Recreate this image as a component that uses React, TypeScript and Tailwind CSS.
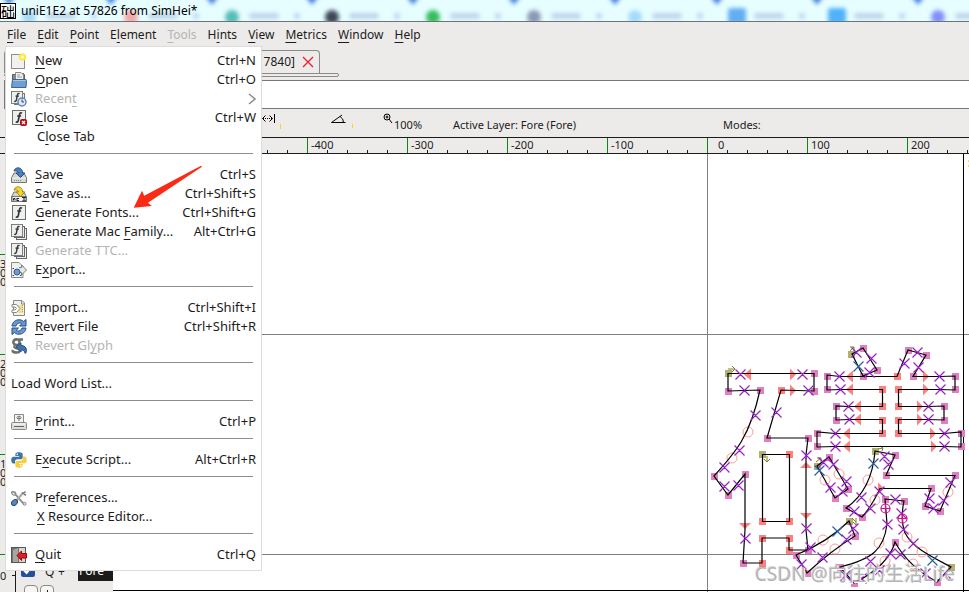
import type { ReactNode } from "react";

type Entry = {
  label?: string;
  // index of the mnemonic letter
  u?: number;
  keys?: string;
  icon?: ReactNode;
  indent?: boolean;
  disabled?: boolean;
  submenu?: boolean;
};

const Icon = ({ children }: { children: ReactNode }) => (
  <svg className="w-4 h-4 shrink-0" viewBox="0 0 16 16" fill="none">
    {children}
  </svg>
);

const FontPage = ({ x = 1, y = 0, s = 14 }: { x?: number; y?: number; s?: number }) => (
  <g transform={`translate(${x} ${y}) scale(${s / 14})`}>
    <rect x="0.5" y="0.5" width="13" height="14" fill="#eef0ee" stroke="#6c6e6b" />
    <path d="M10 3.2C8.6 2.2 7.8 3 7.4 5L6.4 10c-.4 2-1.2 2.6-2.6 1.8M5.2 6h4" stroke="#33363a" strokeWidth="1.7" />
  </g>
);

const FontStack = () => (
  <>
    <rect x="5.5" y="4.5" width="10" height="11" fill="#eee" stroke="#666" />
    <rect x="3.5" y="2.5" width="10" height="11" fill="#eee" stroke="#666" />
    <FontPage x={0} y={0} s={12} />
  </>
);

const Drive = ({ color, edge }: { color: string; edge: string }) => (
  <>
    <path d="M3 6h10l2.5 5v4.5H.5V11z" fill="#d6d8d4" stroke="#74766f" />
    <path d="M1 11h14" stroke="#f6f6f4" />
    <path d="M3 13.5h8" stroke="#888a85" strokeDasharray="1 1" />
    <path d="M3 4C4 1 7 0 9.5 1.5 11 2.5 11.5 4 11.5 6H14L9.5 10.5 5 6h2.5C7.5 4.5 5.5 3.5 3 4z" fill={color} stroke={edge} />
  </>
);

const icons = {
  new: (
    <Icon>
      <rect x="0.5" y="1.5" width="13" height="14" fill="#f1f1ef" stroke="#8c8e8a" />
      <circle cx="11.5" cy="4" r="3.8" fill="#fbe94a" />
      <circle cx="11.5" cy="4" r="1.5" fill="#fffbd0" />
    </Icon>
  ),
  open: (
    <Icon>
      <path d="M1.5 14V2.5h3l1-1h7l1 1.5V14z" fill="#888a85" stroke="#5c5e5a" />
      <path d="M4.5 8V.5H10L12.500 3v5z" fill="#f2f2f0" stroke="#888" />
      <path d="M6 3h3M6 5h5" stroke="#999" />
      <path d="M.5 15.5l1-8H15l.5 1-.5 7z" fill="#729fcf" stroke="#3465a4" />
      <path d="M2 8.500h12.500" stroke="#a9c6e6" />
    </Icon>
  ),
  recent: (
    <Icon>
      <rect x="3.5" y="2.5" width="10" height="11" fill="#eee" stroke="#777" />
      <FontPage x={0} y={0} s={12} />
      <circle cx="11" cy="11" r="4" fill="#dfe9f5" stroke="#5f84b5" strokeWidth="1.5" />
      <path d="M11 8.5V11h2" stroke="#345" />
    </Icon>
  ),
  close: (
    <Icon>
      <FontPage />
      <rect x="9" y="9" width="7" height="7" rx="2" fill="#b80d17" />
      <path d="M11 11l3 3M14 11l-3 3" stroke="#fff" strokeWidth="1.3" />
    </Icon>
  ),
  save: (
    <Icon>
      <Drive color="#4f7fb8" edge="#234f86" />
    </Icon>
  ),
  saveAs: (
    <Icon>
      <Drive color="#f3d52b" edge="#a38a10" />
      <rect x="1" y="10.5" width="14" height="5" fill="#f4f4f2" stroke="#777" />
      <path d="M2.5 14.5v-2H4v2M6 12.5h2M6 14.5h2M6 12v3M11 11.5h4M11 15h4M13 11v4" stroke="#222" />
    </Icon>
  ),
  generate: (
    <Icon>
      <FontPage />
    </Icon>
  ),
  family: (
    <Icon>
      <FontStack />
    </Icon>
  ),
  export: (
    <Icon>
      <path d="M.5.5H8L12 4.500v11H.5z" fill="#f0f0ee" stroke="#888a85" />
      <path d="M8 5.500h2.500V3L15.500 8l-5 5v-2.500H8" fill="#e6e6e4" stroke="#777974" />
      <circle cx="6" cy="10" r="3" fill="#6f9bd1" stroke="#2f5c9a" />
      <path d="M1.500 6.500H3M1.500 13.500H3M9 13.500h1.500" stroke="#444" />
    </Icon>
  ),
  import: (
    <Icon>
      <path d="M2.5.5H11L13.500 3v12.500h-11z" fill="#f0f0ee" stroke="#888a85" />
      <path d="M10.500.5V4h3" stroke="#888a85" />
      <rect x="7" y="5" width="5" height="8" fill="#f2e08a" />
      <path d="M1 4.500h4.500L9 8.500l-3.500 4H1V10h3l1.500-1.500L4 7H1z" fill="#fff" stroke="#888a85" />
      <path d="M11.500 5v8" stroke="#c9a416" strokeDasharray="1 1" />
    </Icon>
  ),
  revert: (
    <Icon>
      <path d="M1 7C1.5 3 4.5.8 8 .8c2 0 3.500.6 4.700 1.700L15 .5V7H8.500l2.300-2.300C9.500 3.500 6 3.500 5 7z" fill="#6b98ce" stroke="#204a87" />
      <path d="M15 9c-.5 4-3.500 6.200-7 6.200-2 0-3.500-.6-4.700-1.700L1 15.500V9h6.500l-2.300 2.300C6.500 12.500 10 12.500 11 9z" fill="#6b98ce" stroke="#204a87" />
    </Icon>
  ),
  revertGlyph: (
    <Icon>
      <path d="M12 1.500H6.500C3 1 2 3 2.500 5S6 7.500 7.500 6.500s1.500-3 0-4M4 8c-2 1.500 2 2.500 4 3s1 3.500-2 3.500-5-.5-4-2.500" stroke="#6d6f69" strokeWidth="2.6" />
      <path d="M5 9l5-4v2.500c3.500 0 5.500 2 5.500 5 0 1.500-.5 2.500-1.500 3 0-2.500-1.500-3.500-4-3.500v2z" fill="#3f72b0" stroke="#2a528a" />
    </Icon>
  ),
  print: (
    <Icon>
      <path d="M3.500 9V.5h9V9" fill="#f4f4f2" stroke="#888a85" />
      <path d="M8 2v5M5.500 3.500L8 2l2.500 1.500M6 4.500h4" stroke="#777" />
      <rect x="0.5" y="8.500" width="15" height="7" rx="1" fill="#dcdcda" stroke="#888a85" />
      <path d="M3 12.500h10" stroke="#666" />
      <path d="M2 10h12" stroke="#fff" />
    </Icon>
  ),
  python: (
    <Icon>
      <path d="M8 .3c-3.200 0-3.600 1-3.600 2.200V4H8.200v.7H2.500C1 4.700.2 6 .2 8s.9 3.400 2.300 3.400H4V9.500C4 8.300 5 7.300 6.200 7.300h3.600c1 0 1.900-.8 1.900-1.900V2.500C11.700 1 10.500.3 8 .3z" fill="#3d73a6" />
      <path d="M8 15.700c3.200 0 3.600-1 3.600-2.200V12H7.800v-.7h5.700c1.500 0 2.300-1.300 2.300-3.300s-.9-3.400-2.300-3.400H12v1.900c0 1.200-1 2.200-2.200 2.200H6.200c-1 0-1.900.8-1.900 1.900v2.900C4.300 15 5.500 15.700 8 15.700z" fill="#f5cf3e" />
      <circle cx="6.3" cy="2.4" r=".8" fill="#fff" />
      <circle cx="9.7" cy="13.6" r=".8" fill="#fff" />
    </Icon>
  ),
  prefs: (
    <Icon>
      <path d="M1 1.500l3 1L5 5l7 8 2 1.500" stroke="#888a85" strokeWidth="1.8" />
      <path d="M5 11l7-8" stroke="#a9aba6" strokeWidth="2.2" />
      <path d="M14.500 1.500l-2 2-1.500-1M15 5l-2-.5" stroke="#777" strokeWidth="1.5" />
      <path d="M1 1.500C0 4 2 5.500 4.500 5" stroke="#888a85" strokeWidth="1.3" />
      <ellipse cx="3.5" cy="12.5" rx="3.3" ry="2.5" transform="rotate(-45 3.5 12.5)" fill="#5b84b8" stroke="#23477c" />
      <circle cx="13.500" cy="13.800" r="1.5" fill="#ddd" stroke="#888" />
    </Icon>
  ),
  quit: (
    <Icon>
      <rect x="0.5" y="0.5" width="14" height="15" fill="#d5d5d3" stroke="#555753" />
      <path d="M1 1h7v14H1z" fill="#73756f" />
      <path d="M2 15V3l5-2v14z" fill="#a5a7a2" />
      <path d="M6 8.500L10.500 4v2.500h5V11h-5v2.500z" fill="#d8232a" stroke="#a40000" />
    </Icon>
  ),
};

const fileMenu: Entry[] = [
  { label: "New", u: 0, keys: "Ctrl+N", icon: icons.new },
  { label: "Open", u: 0, keys: "Ctrl+O", icon: icons.open },
  { label: "Recent", u: 5, icon: icons.recent, disabled: true, submenu: true },
  { label: "Close", u: 0, keys: "Ctrl+W", icon: icons.close },
  { label: "Close Tab", u: 1, indent: true },
  {},
  { label: "Save", u: 0, keys: "Ctrl+S", icon: icons.save },
  { label: "Save as...", u: 1, keys: "Ctrl+Shift+S", icon: icons.saveAs },
  { label: "Generate Fonts...", u: 0, keys: "Ctrl+Shift+G", icon: icons.generate },
  { label: "Generate Mac Family...", u: 13, keys: "Alt+Ctrl+G", icon: icons.family },
  { label: "Generate TTC...", icon: icons.family, disabled: true },
  { label: "Export...", u: 1, icon: icons.export },
  {},
  { label: "Import...", u: 0, keys: "Ctrl+Shift+I", icon: icons.import },
  { label: "Revert File", u: 0, keys: "Ctrl+Shift+R", icon: icons.revert },
  { label: "Revert Glyph", u: 9, icon: icons.revertGlyph, disabled: true },
  {},
  { label: "Load Word List..." },
  {},
  { label: "Print...", u: 0, keys: "Ctrl+P", icon: icons.print },
  {},
  { label: "Execute Script...", u: 1, keys: "Alt+Ctrl+R", icon: icons.python },
  {},
  { label: "Preferences...", u: 2, icon: icons.prefs },
  { label: "X Resource Editor...", u: 0, indent: true },
  {},
  { label: "Quit", u: 0, keys: "Ctrl+Q", icon: icons.quit },
];

const menuBar = [
  { label: "File", u: 0 },
  { label: "Edit", u: 0 },
  { label: "Point", u: 0 },
  { label: "Element", u: 1 },
  { label: "Tools", u: 0, disabled: true },
  { label: "Hints", u: 1 },
  { label: "View", u: 0 },
  { label: "Metrics", u: 0 },
  { label: "Window", u: 0 },
  { label: "Help", u: 0 },
];

function Mnemonic({ text, at }: { text: string; at?: number }) {
  if (at === undefined) return <>{text}</>;
  return (
    <>
      {text.slice(0, at)}
      <span className="underline underline-offset-3">{text[at]}</span>
      {text.slice(at + 1)}
    </>
  );
}

// Blurred browser tabs showing through the glass title bar
const tabBlobs = [
  { x: 29, c: "#a8dcf4" },
  { x: 131, c: "#f4a8a8" },
  { x: 232, c: "#54bdb5" },
  { x: 332, c: "#3c4656" },
  { x: 433, c: "#35bd5c" },
  { x: 534, c: "#8a9ab4" },
  { x: 635, c: "#a4dcfa" },
  { x: 737, c: "#62aef2", sq: true },
  { x: 837, c: "#4fb2fa", sq: true },
  { x: 938, c: "#8290fa" },
];

function TitleBar() {
  return (
    <div className="relative h-[22px] shrink-0 bg-[#e6feff] border-b border-[#6f7376] overflow-hidden">
      <svg className="absolute inset-0 w-full h-full" aria-hidden="true">
        <defs>
          <filter id="soft" x="-50%" y="-50%" width="200%" height="200%">
            <feGaussianBlur stdDeviation="2" />
          </filter>
        </defs>
        <g filter="url(#soft)">
          {tabBlobs.map((b) => (
            <g key={b.x}>
              <path d={`M${b.x - 28} -6h16l-8 11z`} fill="#3f7fe0" />
              {b.sq ? (
                <rect x={b.x - 9} y="8" width="18" height="16" rx="3" fill={b.c} />
              ) : (
                <circle cx={b.x} cy="17" r="7" fill={b.c} />
              )}
              <rect x={b.x + 17} y="13" width="30" height="6" rx="3" fill="#b5cbe6" opacity="0.8" />
              <circle cx={b.x + 65} cy="16" r="3" fill="#b0c6ee" opacity="0.8" />
            </g>
          ))}
        </g>
      </svg>
      <div className="relative flex items-center gap-1 h-full font-[Noto_Sans,Noto_Sans_CJK_SC,sans-serif] text-xs text-black">
        <span className="flex items-center justify-center w-4 h-4 bg-white border border-black text-sm leading-none font-[Noto_Sans_CJK_SC,sans-serif]">
          础
        </span>
        <span className="pl-px">uniE1E2 at 57826 from SimHei*</span>
      </div>
    </div>
  );
}

function FileMenu() {
  return (
    <div
      role="menu"
      className="absolute left-[5px] top-[46px] z-20 w-[257px] pt-1 pb-[6px] bg-white border border-[#dcdcdc] text-[13px]"
    >
      {fileMenu.map((m, i) =>
        m.label ? (
          <button
            key={m.label}
            role="menuitem"
            disabled={m.disabled}
            className="flex items-center w-full h-[19px] px-[5px] text-left text-[#1c1c1c] disabled:text-[#b6b4b2] whitespace-nowrap"
          >
            {m.icon}
            <span className={m.icon ? "pl-2 flex-1" : m.indent ? "pl-[26px] flex-1" : "flex-1"}>
              <Mnemonic text={m.label} at={m.u} />
            </span>
            {m.keys && <span>{m.keys}</span>}
            {m.submenu && (
              <svg className="w-2 h-3" viewBox="0 0 8 12" fill="none" stroke="#8a8a8a" strokeWidth="1.5">
                <path d="M1 1l6 5-6 5" />
              </svg>
            )}
          </button>
        ) : (
          <div key={i} role="separator" className="h-[19px] pt-[7px] px-2">
            <div className="h-px bg-[#8c8c8c]" />
          </div>
        )
      )}
      <svg className="absolute left-[126px] top-[117px] w-[72px] h-[46px]" viewBox="132 164 72 46">
        <path d="M133.7 207.7L142 190.700l2.200 5L201 165.700l1 1L148 202.700l3.700 3.300z" fill="#fb2a17" />
      </svg>
    </div>
  );
}

const rulerMarks = [-700, -600, -500, -400, -300, -200, -100, 0, 100, 200];

function TopRuler() {
  return (
    <div className="flex h-[17px] pl-[7px] shrink-0 border-y border-[#1c1c1c] overflow-hidden">
      {rulerMarks.map((n) => (
        <div key={n} className="flex flex-col justify-between w-[100px] shrink-0 border-l border-[#0a8a0a]">
          <span className={n === 0 ? "h-3 pl-[10px] text-[11px] leading-[14px]" : "h-3 pl-[3px] text-[11px] leading-[14px]"}>
            {n}
          </span>
          <div className="flex h-[3px] pl-[19px] gap-[19px]">
            <i className="w-px bg-[#1c1c1c]" />
            <i className="w-px bg-[#1c1c1c]" />
            <i className="w-px bg-[#1c1c1c]" />
            <i className="w-px bg-[#1c1c1c]" />
          </div>
        </div>
      ))}
    </div>
  );
}

function SideRuler() {
  return (
    <div className="w-4 shrink-0 pt-[100px] border-r border-[#1c1c1c] text-[11px] leading-[9px] overflow-hidden">
      {["300", "200", "100"].map((n) => (
        <div key={n} className="flex flex-col h-[100px] pt-1 border-t border-[#0a8a0a]">
          {n.split("").map((d, i) => (
            <span key={i}>{d}</span>
          ))}
        </div>
      ))}
      <div className="flex items-end justify-between h-[26px] border-t border-[#0a8a0a]">
        <span>0</span>
        <i className="w-[3px] h-px mb-1 bg-[#1c1c1c]" />
      </div>
    </div>
  );
}

function Layers() {
  return (
    <div className="flex flex-col justify-end w-[97px] shrink-0 pl-[5px] overflow-hidden">
      <div className="flex items-center h-[18px]">
        <input type="checkbox" defaultChecked aria-label="Show Fore layer" className="w-[14px] h-[14px] mb-1 accent-[#24509a]" />
        <span className="w-[13px] ml-[10px]">Q</span>
        <span className="w-5">+</span>
        <span className="flex-1 h-full px-px bg-[#1c1c1c] text-white leading-[16px]">Fore</span>
      </div>
      <div className="flex gap-[2px] h-[7px] mt-1 pl-[3px]">
        <button aria-label="Remove layer" className="w-[14px] h-4 bg-[#f7f6f5] border border-[#8a8a88] rounded-sm">
          <svg className="w-3 h-3" viewBox="0 0 12 12" stroke="#1c1c1c">
            <path d="M4 7.500h4" />
          </svg>
        </button>
        <button aria-label="Add layer" className="w-[14px] h-4 bg-[#f7f6f5] border border-[#8a8a88] rounded-sm">
          <svg className="w-3 h-3" viewBox="0 0 12 12" stroke="#1c1c1c">
            <path d="M3 6.500h6M6.500 3v7" />
          </svg>
        </button>
      </div>
    </div>
  );
}

// Outlines of the glyph being edited
const outlines = [
  "M728 373.5L814 373.5V391L781 390 767 438H808L806 455V530L808 550H789V538H762V563H743L745 530V474L728 495 714 476C736 452 750 436 760 390L728 391z",
  "M762.5 454.5h27v67h-27z",
  "M852 354L863 348 877 370 863 376z",
  "M827 375L840 376.5H897L908 350 926 355 913 376.5H940L955 376V390L940 389.5H898.5V406.5H928L944 406V420L928 419.5H898.5V433.5H944L961 432V447L944 446.5H835L817 447V432L835 433.5H882.5V419.5H849L836 420V406L848 406.5H882.5V389.5H840L827 390z",
  "M817 466L829 457 848 489 835 498z",
  "M875 451L895 455 886 475.5H955L940 511 925 506 931 488.5H880Q872 506 862 517L846 508Q872 490 875 451z",
  "M849 521L855 536Q832 550 807 573L796 555Q828 542 849 521z",
  "M885 499L904 501Q900 520 905 533C913 548 930 556 951 567L937 582Q908 566 895 542C890 560 872 574 854 583L840 567C872 559 884 550 887 524z",
];

const corners = [
  [814, 373], [728, 391], [760, 390], [814, 391], [767, 438], [808, 438], [714, 476], [745, 474], [728, 495], [743, 563], [808, 550],
  [863, 348], [877, 370], [863, 376], [908, 350], [926, 355], [913, 376], [827, 376], [827, 389], [955, 376], [955, 389],
  [836, 406], [836, 420], [944, 406], [944, 420], [817, 433], [817, 446], [961, 433], [961, 446],
  [829, 457], [848, 489], [835, 498], [895, 455], [886, 475], [955, 475], [940, 511], [925, 506], [931, 488], [846, 508], [862, 517],
  [855, 536], [807, 573], [796, 555], [885, 499], [904, 501], [895, 542], [937, 582], [854, 583], [840, 567],
];
const hinted = [
  [781, 390], [789, 454], [789, 521], [762, 521], [762, 538], [789, 538], [789, 550], [762, 563],
  [897, 376], [882, 389], [898, 389], [882, 406], [898, 406], [882, 420], [898, 420], [882, 433], [898, 433],
];
const starts = [[728, 373], [762, 454], [851, 354], [817, 466], [875, 451], [849, 521], [951, 567]];
const handles = [
  [740, 374], [802, 374], [744, 390], [808, 390], [755, 415], [776, 412], [739, 450], [724, 467], [738, 485], [724, 486], [745, 538], [806, 455], [806, 528],
  [856, 352], [871, 358], [869, 372], [904, 363], [917, 352], [918, 367], [839, 376], [840, 389], [848, 406], [849, 419], [835, 433], [835, 446],
  [939, 376], [940, 389], [928, 406], [928, 419], [944, 433], [944, 446], [823, 462], [833, 464], [846, 481], [842, 491], [830, 487],
  [884, 456], [888, 464], [861, 497], [854, 511], [870, 508], [879, 491], [950, 482], [943, 500], [933, 508], [929, 498],
  [810, 547], [801, 564], [822, 557], [846, 539], [853, 528], [895, 499], [901, 513], [903, 529], [913, 543], [945, 573], [925, 573],
  [900, 554], [890, 553], [879, 570], [870, 561], [845, 575], [861, 578], [887, 524],
];
const extrema = [[858, 366], [819, 470], [873, 463], [837, 531], [932, 560]];
const inflections = [
  [748, 432], [732, 458], [825, 480], [839, 474], [868, 480], [875, 500], [948, 492], [823, 540], [835, 549],
  [879, 543], [885, 561], [907, 537], [922, 552], [913, 564],
];
const arrowsLeft = [[748, 374], [850, 376], [850, 389], [858, 406], [858, 419], [847, 433], [847, 446]];
const arrowsRight = [[793, 374], [793, 390], [926, 376], [926, 389], [920, 406], [920, 419], [933, 433], [934, 446], [881, 488]];

const cross = ([x, y]: number[]) => `M${x - 4.5} ${y - 4.5}l10 10m0 -10l-10 10`;

function GlyphCanvas() {
  return (
    <div className="relative flex-1 bg-white overflow-hidden">
      <svg className="w-[856px] h-[438px]" viewBox="113 154 856 438" fill="none">
        <path d="M113 334.5h856M113 554.5h856M707.5 154v438" stroke="#808080" />
        <path d="M963.5 154v438M113 590.5h856" stroke="#000" />
        <path d="M968 161h1M968 166h1" stroke="#f0a020" />
        <g fill="#e080c0">
          {corners.map(([x, y]) => (
            <rect key={`${x},${y}`} x={x - 3} y={y - 3} width="7" height="7" />
          ))}
        </g>
        <g fill="#ff8080">
          {hinted.map(([x, y]) => (
            <rect key={`${x},${y}`} x={x - 3} y={y - 3} width="7" height="7" />
          ))}
          {arrowsLeft.map(([x, y]) => (
            <path key={`${x},${y}`} d={`M${x - 4} ${y + 0.5}l7 -6v12z`} />
          ))}
          {arrowsRight.map(([x, y]) => (
            <path key={`${x},${y}`} d={`M${x + 3} ${y + 0.5}l-6 -6v12z`} />
          ))}
          <path d="M806 462l6 6h-12zM806 519l6 -6h-12zM745 529l6 -6h-12z" />
        </g>
        <g fill="#b0b070">
          {starts.map(([x, y]) => (
            <rect key={`${x},${y}`} x={x - 3} y={y - 3} width="7" height="7" />
          ))}
        </g>
        <g stroke="#ff9c94">
          {inflections.map(([x, y]) => (
            <circle key={`${x},${y}`} cx={x} cy={y} r="5" />
          ))}
        </g>
        <path
          d="M728 369h7m-3 -3l3 3-3 3M767 456v6m-3 -3l3 3 3-3M850 351l4-4m-4 0h4v4M816 462l5-4m-4 0h4v4M852 518l4 4m0-4v7l-3-3M878 449l5 -1m-3-2l3 2-1 3"
          stroke="#808020"
        />
        {outlines.map((d) => (
          <path key={d} d={d} stroke="#000" strokeWidth="1.2" />
        ))}
        <path d={handles.map(cross).join("")} stroke="#9a22c4" strokeWidth="1.2" />
        <path d={extrema.map(cross).join("")} stroke="#2a5fa8" strokeWidth="1.2" />
        <g stroke="#d0108c" strokeWidth="1.2">
          <circle cx="885.5" cy="508.5" r="4.5" />
          <circle cx="902.5" cy="518.5" r="4.5" />
          <path d="M881 508.5h9M885.5 504v9M898 518.5h9M902.5 514v9" />
        </g>
      </svg>
      <span className="absolute right-[14px] bottom-0 text-[19px] leading-9 whitespace-nowrap text-[#b4b4b4] font-[Noto_Sans,Noto_Sans_CJK_SC,sans-serif] [text-shadow:1px_1px_0_#ffffff,-1px_-1px_0_#8a8a8a55]">
        CSDN @向往的生活Life
      </span>
    </div>
  );
}

export default function App() {
  return (
    <div className="relative flex flex-col h-screen overflow-hidden bg-[#edebea] text-[#1c1c1c] text-xs font-[Noto_Sans,sans-serif]">
      <TitleBar />
      <nav className="flex items-center gap-[11px] h-[25px] pl-[7px] shrink-0">
        {menuBar.map((m) => (
          <button key={m.label} disabled={m.disabled} className="disabled:text-[#b6b4b2]">
            <Mnemonic text={m.label} at={m.u} />
          </button>
        ))}
      </nav>

      {/* Glyph tabs */}
      <div className="h-[33px] pt-[3px] pl-[4px] shrink-0">
        <div className="flex items-center justify-end gap-[7px] w-[316px] h-[23px] pr-[5px] border border-b-0 border-[#8a8a88] rounded-t">
          <span>7840]</span>
          <button aria-label="Close tab">
            <svg className="w-3 h-3" viewBox="0 0 12 12" stroke="#e8202a" strokeWidth="1.3">
              <path d="M1 1l10 10M11 1L1 11" />
            </svg>
          </button>
        </div>
        <div className="w-[335px] h-1 border border-[#8a8a88] rounded-sm" />
      </div>

      <input
        aria-label="Word list"
        className="h-[29px] ml-[4px] shrink-0 bg-white border border-r-0 border-[#777] outline-none"
      />

      {/* Info bar */}
      <div className="flex items-start h-7 pl-[262px] shrink-0 text-[11px] leading-[16px]">
        <svg className="w-[22px] h-5 mt-1" viewBox="0 0 22 20" fill="none" stroke="#000">
          <path d="M3.5 2.5L.5 5.5l3 3M7.5 2.5l3 3-3 3M12.5 1v9" />
          <path d="M1 5.5h10" strokeDasharray="1 1" />
          <path d="M18.5 11v5" stroke="#f0d820" />
        </svg>
        <svg className="w-6 h-5 mt-1 ml-[47px]" viewBox="0 0 24 20" fill="none" stroke="#000">
          <path d="M14.5 9.500H.5L11 2M9 3.500q3.500 2 3.500 6" />
          <path d="M21.500 11v4" stroke="#f0d820" />
        </svg>
        <svg className="w-[10px] h-[10px] mt-1 ml-[28px]" viewBox="0 0 10 10" fill="none" stroke="#000">
          <circle cx="4" cy="4" r="3" />
          <path d="M4 2.500v3M2.500 4h3M6 6l3 4" />
        </svg>
        <span className="w-[59px] mt-2 pl-px">100%</span>
        <span className="w-[271px] mt-2 pl-px">Active Layer: Fore (Fore)</span>
        <span className="mt-2">Modes:</span>
      </div>

      <TopRuler />
      <div className="flex flex-1 min-h-0">
        <SideRuler />
        <Layers />
        <GlyphCanvas />
      </div>
      <FileMenu />
    </div>
  );
}
